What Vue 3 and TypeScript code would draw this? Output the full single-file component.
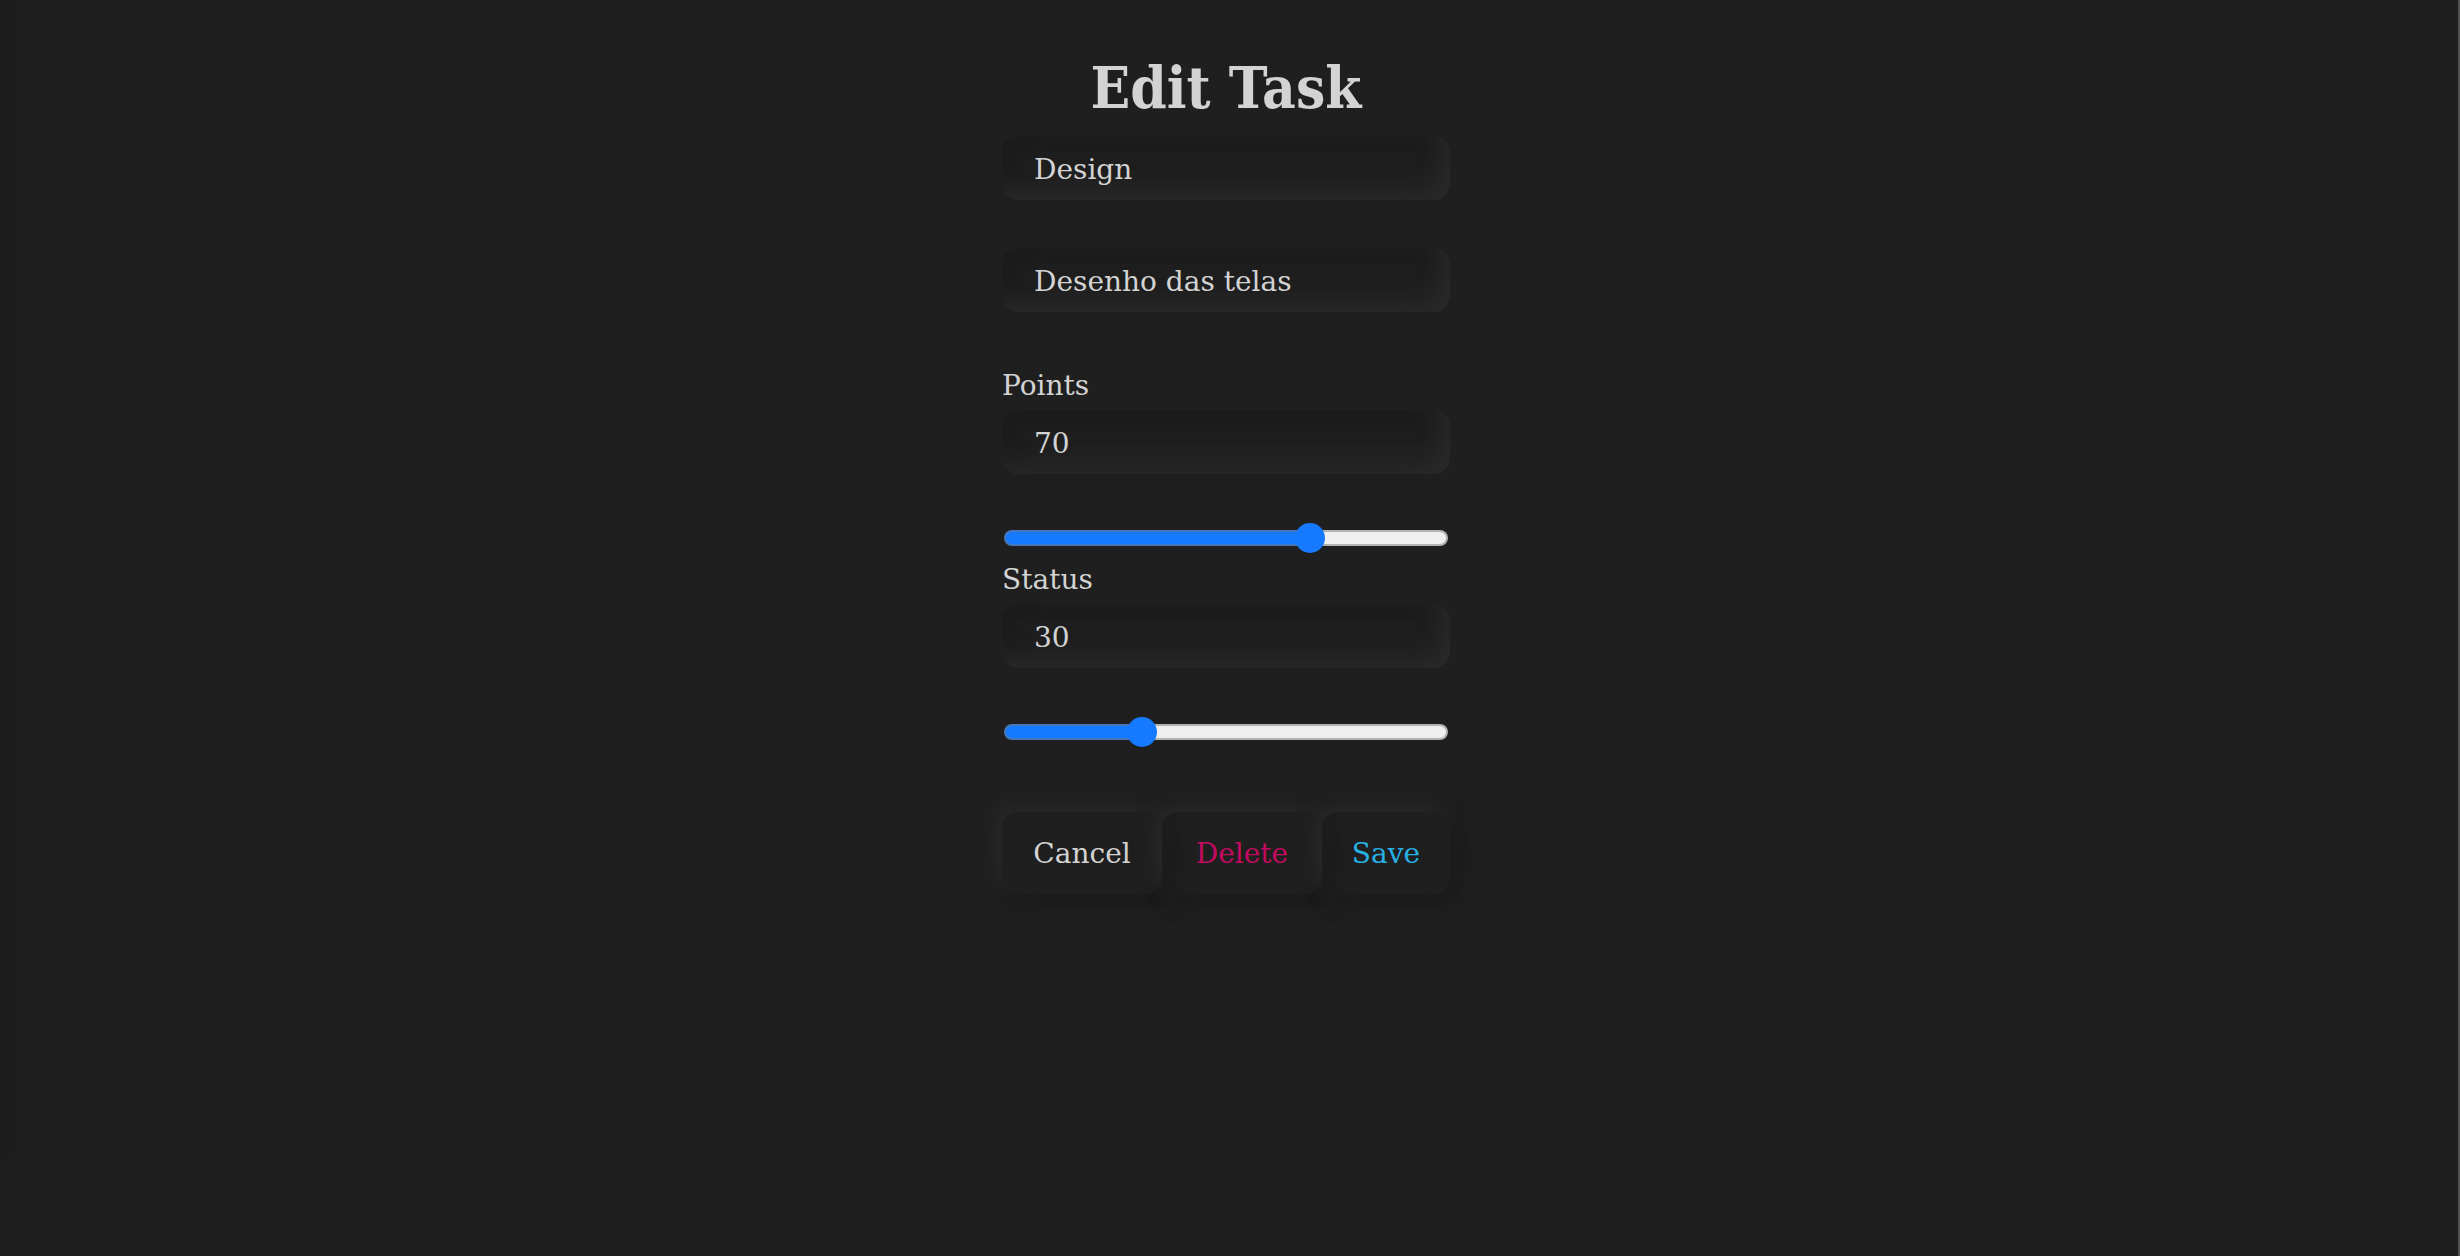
<script setup lang="ts">
import { ref } from 'vue'

const title = ref('Design')
const description = ref('Desenho das telas')
const points = ref(70)
const status = ref(30)
</script>

<template>
  <div class="page">
    <aside class="drawer" aria-hidden="true"></aside>
    <main class="content">
      <form class="task-form" @submit.prevent>
        <h1 class="heading">Edit Task</h1>
        <input v-model="title" class="field" type="text" aria-label="Title" />
        <input v-model="description" class="field" type="text" aria-label="Description" />

        <label class="label" for="points">Points</label>
        <input id="points" v-model.number="points" class="field" type="text" inputmode="numeric" />
        <input
          v-model.number="points"
          class="slider"
          type="range"
          min="0"
          max="100"
          aria-label="Points"
          :style="{ '--value': points + '%' }"
        />

        <label class="label" for="status">Status</label>
        <input id="status" v-model.number="status" class="field" type="text" inputmode="numeric" />
        <input
          v-model.number="status"
          class="slider"
          type="range"
          min="0"
          max="100"
          aria-label="Status"
          :style="{ '--value': status + '%' }"
        />

        <div class="actions">
          <button class="button" type="button">Cancel</button>
          <button class="button danger" type="button">Delete</button>
          <button class="button primary" type="submit">Save</button>
        </div>
      </form>
    </main>
  </div>
</template>

<style>
body {
  margin: 0;
  background: #1f1f1f;
}
</style>

<style scoped>
.page {
  position: relative;
  box-sizing: border-box;
  min-height: 100vh;
  overflow: hidden;
  border-right: 2px solid #525150;
  background: #1f1f1f;
  color: #d3d3d3;
  font-family: 'DejaVu Serif', serif;
  font-size: 28px;
}

.drawer {
  position: absolute;
  top: -48px;
  bottom: 100px;
  right: 100%;
  width: 400px;
  border-radius: 16px;
  box-shadow: 8px 8px 30px #1c1c1c;
}

.content {
  display: flex;
  justify-content: center;
  padding: 48px 6px 48px 0;
}

.task-form {
  display: flex;
  flex-direction: column;
  width: 448px;
}

.heading {
  margin: 0;
  height: 88px;
  font-family: 'DejaVu Serif Condensed', 'DejaVu Serif', serif;
  font-size: 58px;
  font-stretch: condensed;
  font-weight: 700;
  line-height: 80px;
  text-align: center;
  white-space: nowrap;
}

.field {
  box-sizing: border-box;
  width: 100%;
  height: 64px;
  margin: 0 0 48px;
  padding: 2px 32px 0;
  border: 0;
  border-radius: 16px;
  outline: 0;
  background: transparent;
  box-shadow:
    inset -10px -10px 20px #292929,
    inset 10px 10px 20px #1b1b1b;
  color: inherit;
  font: inherit;
}

.label {
  padding-top: 2px;
  line-height: 48px;
}

.slider {
  appearance: none;
  width: 100%;
  height: 32px;
  margin: 0;
  background: transparent;
}

.slider::-webkit-slider-runnable-track {
  box-sizing: border-box;
  height: 16px;
  margin: 0 2px;
  border: 2px solid rgba(118, 118, 118, 0.5);
  border-radius: 8px;
  background: linear-gradient(to right, #157aff var(--value), #efefef var(--value)) border-box;
}

.slider::-webkit-slider-thumb {
  appearance: none;
  width: 22px;
  height: 22px;
  margin-top: -5px;
  border-radius: 50%;
  background: #157aff;
  box-shadow: 0 0 0 4px #157aff;
}

.actions {
  display: flex;
  margin-top: 64px;
}

.button {
  flex: 5 1 0;
  height: 82px;
  padding: 0;
  border: 0;
  border-radius: 16px;
  background: transparent;
  box-shadow:
    -8px -8px 20px #282828,
    8px 8px 20px #1a1a1a;
  color: inherit;
  font: inherit;
}

.danger {
  color: #c20b60;
}

.primary {
  flex-grow: 4;
  color: #27b0e3;
}
</style>
